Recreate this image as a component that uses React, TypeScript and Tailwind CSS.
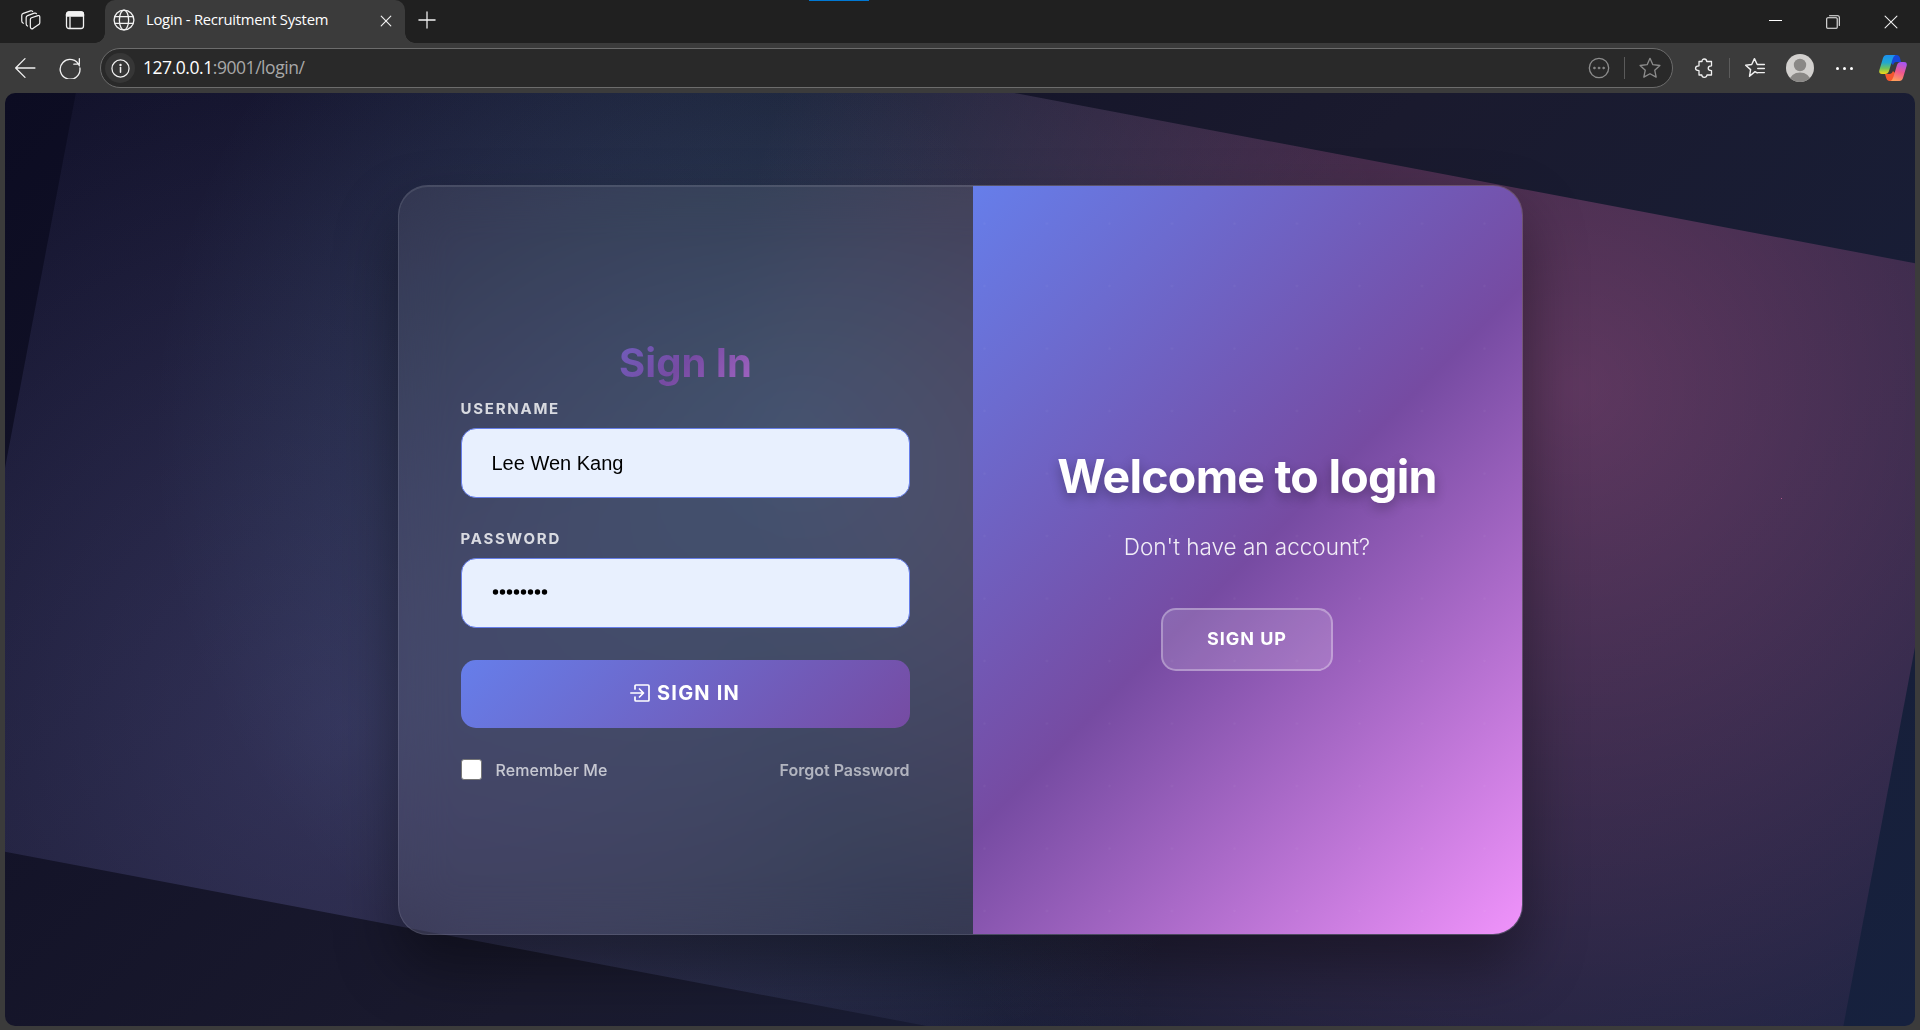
import React from "react";

const Line = ({ children, size = 20, sw = 1.2, className = "" }: { children: React.ReactNode; size?: number; sw?: number; className?: string }) => (
  <svg width={size} height={size} viewBox="0 0 20 20" fill="none" stroke="currentColor" strokeWidth={sw} strokeLinecap="round" strokeLinejoin="round" className={"shrink-0 " + className}>
    {children}
  </svg>
);

function TabBar() {
  return (
    <div className="flex h-[43px] shrink-0 bg-[#202020] text-[#f2f2f2]">
      <div className="flex w-[105px] items-center pb-[3px] pl-5">
        <Line size={22} sw={1.1}>
          <path d="M10.500 8 16.300 6Q18 5.600 18 7.200V12.500Q18 13.600 17 14.200L12 17.600Q10.300 18.600 9.700 17.300Q9.400 16.800 9.400 16V9.600Q9.400 8.400 10.500 8Z" />
          <path d="M6.800 15.500Q5.600 15 5.600 13.500V7.800Q5.600 6.500 6.900 6L13 3.800Q14.500 3.400 15 4.300" />
          <path d="M3 13Q1.600 12.500 1.600 11V5.700Q1.600 4.500 3 4L9.500 1.700Q11 1.300 11.500 2.300" />
        </Line>
        <Line size={20} sw={1.3} className="ml-[23px]">
          <rect x="1.500" y="2" width="17" height="16.500" rx="2.500" />
          <path d="M1.500 4.500Q1.500 2 4 2H16Q18.500 2 18.500 4.500V6H1.500Z" fill="currentColor" />
          <path d="M5 7V18" />
        </Line>
      </div>
      <div className="relative flex w-[300px] items-center rounded-t-[10px] bg-[#3b3b3b] pb-[3px] pl-2">
        <Line size={22} sw={1.2}>
          <circle cx="10" cy="10" r="9" />
          <ellipse cx="10" cy="10" rx="4.200" ry="9" />
          <path d="M2 7H18M2 13H18" />
        </Line>
        <span className="mb-[2px] ml-[11px] font-['Open_Sans','Noto_Sans',sans-serif] text-[14.800px] tracking-[-0.25px] text-white">Login - Recruitment System</span>
        <Line size={12} sw={1.9} className="absolute left-[275px] top-[15px]">
          <path d="M2 2 18 18M18 2 2 18" />
        </Line>
        <i className="absolute -left-[10px] bottom-0 size-[10px] bg-[radial-gradient(circle_at_0_0,transparent_9.500px,#3b3b3b_10px)]" />
        <i className="absolute -right-[10px] bottom-0 size-[10px] bg-[radial-gradient(circle_at_100%_0,transparent_9.500px,#3b3b3b_10px)]" />
      </div>
      <div className="flex items-center pb-[4px] pl-[13px]">
        <Line size={18} sw={1.4}><path d="M10 1V19M1 10H19" /></Line>
      </div>
      <div className="ml-[373px] h-px w-[60px] bg-[#0078d4]" />
      <div className="ml-auto flex items-center gap-[44px] pr-[22px]">
        <i className="mb-[2px] h-px w-[13px] bg-white" />
        <Line size={14} sw={1.500}>
          <rect x="1" y="4" width="15" height="15" rx="1.500" />
          <path d="M5 1.200H17Q19 1.200 19 3.200V15" />
        </Line>
        <Line size={14} sw={1.500}><path d="M1.500 1.500 18.500 18.500M18.500 1.500 1.500 18.500" /></Line>
      </div>
    </div>
  );
}

function CopilotIcon() {
  return (
    <svg width="28" height="26" viewBox="0 0 28 26" className="shrink-0">
      <defs>
        <linearGradient id="cl" x1="0" y1="0" x2="0" y2="1">
          <stop offset="0" stopColor="#1b8ff0" /><stop offset=".4" stopColor="#21a8d0" /><stop offset=".7" stopColor="#6fc35b" /><stop offset="1" stopColor="#f5d816" />
        </linearGradient>
        <linearGradient id="cr" x1=".6" y1="0" x2=".3" y2="1">
          <stop offset="0" stopColor="#a855f0" /><stop offset=".5" stopColor="#f0588c" /><stop offset="1" stopColor="#ffa05a" />
        </linearGradient>
      </defs>
      <path d="M13 0H17.500Q20 0 21 3L22 7H17Q15 7 14 10L10 6Z" fill="#1747d8" />
      <path d="M15 26H10Q8 26 7.200 23L6 19H11Q13 19 14 16L18 20Z" fill="#f4572e" />
      <path d="M7.500 0H16.500Q14.500 1 13.600 4L10 16Q9 19 6 19H3Q-.6 19 .4 15L4 3Q5 0 7.500 0Z" fill="url(#cl)" />
      <path d="M20.500 26H11.500Q13.500 25 14.400 22L18 10Q19 7 22 7H25Q28.600 7 27.600 11L24 23Q23 26 20.500 26Z" fill="url(#cr)" />
    </svg>
  );
}

function Toolbar() {
  return (
    <div className="flex h-[50px] shrink-0 items-center bg-[#3b3b3b] pr-[13px] pl-[14px] text-[#f0f0f0]">
      <Line size={22} sw={1.2}><path d="M1.500 10H19M10 1.500 1.500 10 10 18.500" /></Line>
      <Line size={22} sw={1.2} className="ml-[23px]"><path d="M18.500 8A9 9 0 1 0 19 10M18.500 1.500V6.500H13.500" /></Line>
      <div className="ml-[19px] flex h-10 w-[1573px] items-center rounded-full border border-[#6c6c6c] bg-[#292929] pl-1">
        <span className="flex size-[30px] items-center justify-center rounded-full bg-[#363636]">
          <Line size={19} sw={1.300}><circle cx="10" cy="10" r="9" /><path d="M10 9V14" strokeWidth="1.600" /><circle cx="10" cy="6.300" r=".6" fill="currentColor" /></Line>
        </span>
        <span className="mb-px ml-[8px] font-['Open_Sans','Noto_Sans',sans-serif] text-[17.500px] tracking-[-0.45px] text-[#a8a8a8]"><span className="text-white">127.0.0.1</span>:9001/login/</span>
        <div className="ml-auto flex items-center pr-[11px] text-[#8c8c8c]">
          <Line size={22} sw={1.200}><circle cx="10" cy="10" r="8.800" /><g fill="currentColor" strokeWidth=".5"><circle cx="5.800" cy="10" r=".9" /><circle cx="10" cy="10" r=".9" /><circle cx="14.200" cy="10" r=".9" /></g></Line>
          <i className="ml-[14px] h-[22px] w-px bg-[#5a5a5a]" />
          <Line size={22} sw={1.200} className="ml-[14px]"><path d="M10 1.200 12.600 7l6.400.7-4.700 4.300 1.300 6.300L10 15.200 4.400 18.300 5.700 12 1 7.700 7.400 7Z" /></Line>
        </div>
      </div>
      <Line size={20} sw={1.300} className="ml-[21px]">
        <path d="M5 3.500H8Q8 1 10.300 1T12.700 3.500H17.500V7.800Q14.200 7.800 14.200 10.200T17.500 12.600V17H13Q12.700 19.300 10.300 19.300T7.800 17H5V12.700Q1.500 12.500 1.500 10.200T5 7.800Z" />
      </Line>
      <i className="ml-[15px] h-5 w-px bg-[#5c5c5c]" />
      <Line size={22} sw={1.300} className="ml-[14px]"><path d="M12 14.500 10 13.300 5 17.500 6 11.500 1.500 7.500 7 6.800 9.500 1.500 12 6.800H18.500M12.500 10.500H18.500M12.500 14.200H18.500" /></Line>
      <svg width="28" height="28" viewBox="0 0 28 28" className="ml-[20px] shrink-0">
        <clipPath id="av"><circle cx="14" cy="14" r="14" /></clipPath>
        <g clipPath="url(#av)"><rect width="28" height="28" fill="#d2d0ce" /><circle cx="14" cy="11" r="6.200" fill="#8a8886" /><ellipse cx="14" cy="27" rx="10.500" ry="8.500" fill="#8a8886" /></g>
      </svg>
      <div className="ml-[22px] flex gap-[4px]"><i className="size-[3px] rounded-full bg-white" /><i className="size-[3px] rounded-full bg-white" /><i className="size-[3px] rounded-full bg-white" /></div>
      <div className="ml-auto"><CopilotIcon /></div>
    </div>
  );
}

function Field({ label, value, password }: { label: string; value: string; password?: boolean }) {
  return (
    <div className="mb-[31px]">
      <div className="mb-[9px] text-[15px] leading-[20px] font-bold tracking-[1.750px] text-white/80">{label}</div>
      <div className="flex h-[70px] items-center rounded-[15px] border border-[#667eea] bg-[#e8f0fe] px-[30px] font-['Liberation_Sans',Arial,sans-serif] text-[20px] text-black">
        {password ? (
          <svg width="58" height="6" viewBox="0 0 58 6" className="mb-px">
            {Array.from({ length: 8 }, (_, i) => <circle key={i} cx={3.5 + i * 7} cy="3" r="2.700" />)}
          </svg>
        ) : value}
      </div>
    </div>
  );
}

export default function App() {
  return (
    <div className="flex h-[1030px] w-[1920px] flex-col overflow-hidden bg-[#3b3b3b] font-['Inter',sans-serif]">
      <TabBar />
      <Toolbar />
      <main className="relative mx-[5px] flex h-[933px] items-center justify-center overflow-hidden rounded-[10px] bg-[linear-gradient(135deg,#0c0c22_0%,#1a1a2e_50%,#16213e_100%)]">
        <div className="absolute inset-0 -translate-y-[2px] rotate-[10.700deg] bg-[radial-gradient(circle_at_20%_80%,rgba(120,119,198,0.3)_0%,transparent_50%),radial-gradient(circle_at_80%_20%,rgba(255,119,198,0.3)_0%,transparent_50%),radial-gradient(circle_at_40%_40%,rgba(120,219,255,0.2)_0%,transparent_50%)]" />
        <i className="absolute top-[405px] left-[1776px] size-px bg-[#a8558a]" />
        <div className="relative flex h-[750px] w-[1125px] overflow-hidden rounded-[30px] border border-white/10 bg-white/8 shadow-[0_31px_62px_rgba(0,0,0,0.4),inset_0_1px_0_rgba(255,255,255,0.1)] backdrop-blur-[25px]">
          <section className="flex w-[574px] flex-col justify-center pr-[63px] pl-[62px]">
            <h1 className="mb-[11px] bg-[linear-gradient(135deg,#667eea_0%,#764ba2_50%,#f093fb_100%)] bg-clip-text pl-px text-center text-[40px] leading-[50px] font-bold text-transparent">Sign In</h1>
            <Field label="USERNAME" value="Lee Wen Kang" />
            <Field label="PASSWORD" value="" password />
            <button className="mt-px flex h-[68px] items-center justify-center gap-[7px] rounded-[15px] bg-[linear-gradient(135deg,#667eea_0%,#764ba2_100%)] pb-px text-[20px] font-bold tracking-[1.200px] text-white">
              <Line size={20} sw={1.700}><path d="M5 6V3Q5 2 6 2H18Q19 2 19 3V17Q19 18 18 18H6Q5 18 5 17V14M.8 10H13M9.500 6 13.500 10 9.500 14" /></Line>
              SIGN IN
            </button>
            <div className="mt-[30px] flex items-center text-[16px] font-medium text-white/60">
              <i className="size-[21px] rounded-[3px] border border-[#767676] bg-white" />
              <span className="ml-[14px] tracking-[0.080px] text-white/70">Remember Me</span>
              <span className="ml-auto font-semibold">Forgot Password</span>
            </div>
          </section>
          <section className="flex flex-1 flex-col items-center justify-center bg-[radial-gradient(circle_at_11.500px_37.500px,rgba(255,255,255,0.04)_0.800px,transparent_1.600px),linear-gradient(135deg,#667eea_0%,#764ba2_50%,#f093fb_100%)] bg-size-[62.500px_62.500px,auto] text-white">
            <h2 className="-mt-px mb-px text-[46.500px] leading-[58px] font-bold tracking-[-0.750px] [text-shadow:0_5px_12px_rgba(0,0,0,0.3)]">Welcome to login</h2>
            <p className="mt-[23px] text-[22.500px] leading-[36px] font-light text-white/90">Don't have an account?</p>
            <button className="mt-[43px] h-[63px] w-[172px] rounded-[15px] border-2 border-white/30 bg-white/15 pb-[3px] text-[18px] font-bold tracking-[0.950px]">SIGN UP</button>
          </section>
        </div>
      </main>
    </div>
  );
}
